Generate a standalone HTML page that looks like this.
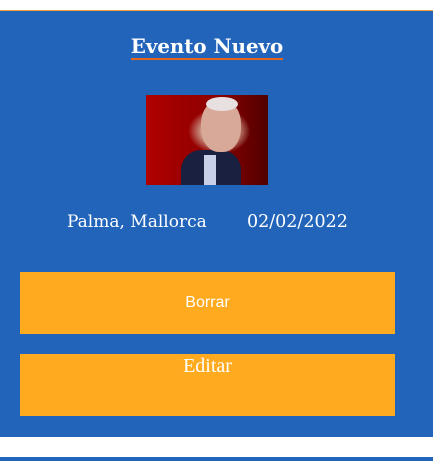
<!DOCTYPE html>
<html><head><meta charset="utf-8"><style>
*{margin:0;padding:0;box-sizing:border-box}
body{width:433px;height:461px;background:#fff;position:relative;overflow:hidden;font-family:"DejaVu Serif",serif}
.top{position:absolute;left:0;top:10px;width:433px;height:1px;background:#f0a030}
.card{position:absolute;left:0;top:11px;width:433px;height:426px;background:#2264ba}
.bot{position:absolute;left:0;top:457px;width:433px;height:4px;background:#2264ba}
h1{position:absolute;left:0;width:414px;top:34px;text-align:center;color:#fff;font-size:19.8px;font-weight:bold;line-height:25px}
h1 span{border-bottom:2px solid #e8661a}
.img{position:absolute;left:146px;top:95px;width:122px;height:90px;background:radial-gradient(ellipse at 60% 40%,#e0b8a8 0,#c89080 18%,transparent 30%),linear-gradient(90deg,#b00000,#8a0000 60%,#500000);overflow:hidden}
.img .suit{position:absolute;left:35px;top:55px;width:60px;height:40px;background:#1a2040;border-radius:20px 20px 0 0}
.img .shirt{position:absolute;left:58px;top:60px;width:12px;height:30px;background:#c8d0e8}
.img .head{position:absolute;left:55px;top:5px;width:40px;height:52px;background:#d8a898;border-radius:45%;}
.img .hair{position:absolute;left:60px;top:2px;width:32px;height:14px;background:#e8e0e0;border-radius:50%}
.t{position:absolute;top:211px;color:#fff;font-size:17.5px;line-height:22px}
.btn{position:absolute;left:20px;width:375px;height:62px;background:#ffaa1f;color:#fff;text-align:center}
</style></head><body>
<div class="top"></div>
<div class="card"></div>
<div class="bot"></div>
<h1><span>Evento Nuevo</span></h1>
<div class="img"><div class="suit"></div><div class="shirt"></div><div class="head"></div><div class="hair"></div></div>
<div class="t" style="left:67px;font-size:17px">Palma, Mallorca</div>
<div class="t" style="left:247px">02/02/2022</div>
<div class="btn" style="top:272px;font-family:'Liberation Sans',sans-serif;font-size:16px;line-height:62px">Borrar</div>
<div class="btn" style="top:354px;font-family:'Liberation Serif',serif;font-size:20px;line-height:24px">Editar</div>
</body></html>
